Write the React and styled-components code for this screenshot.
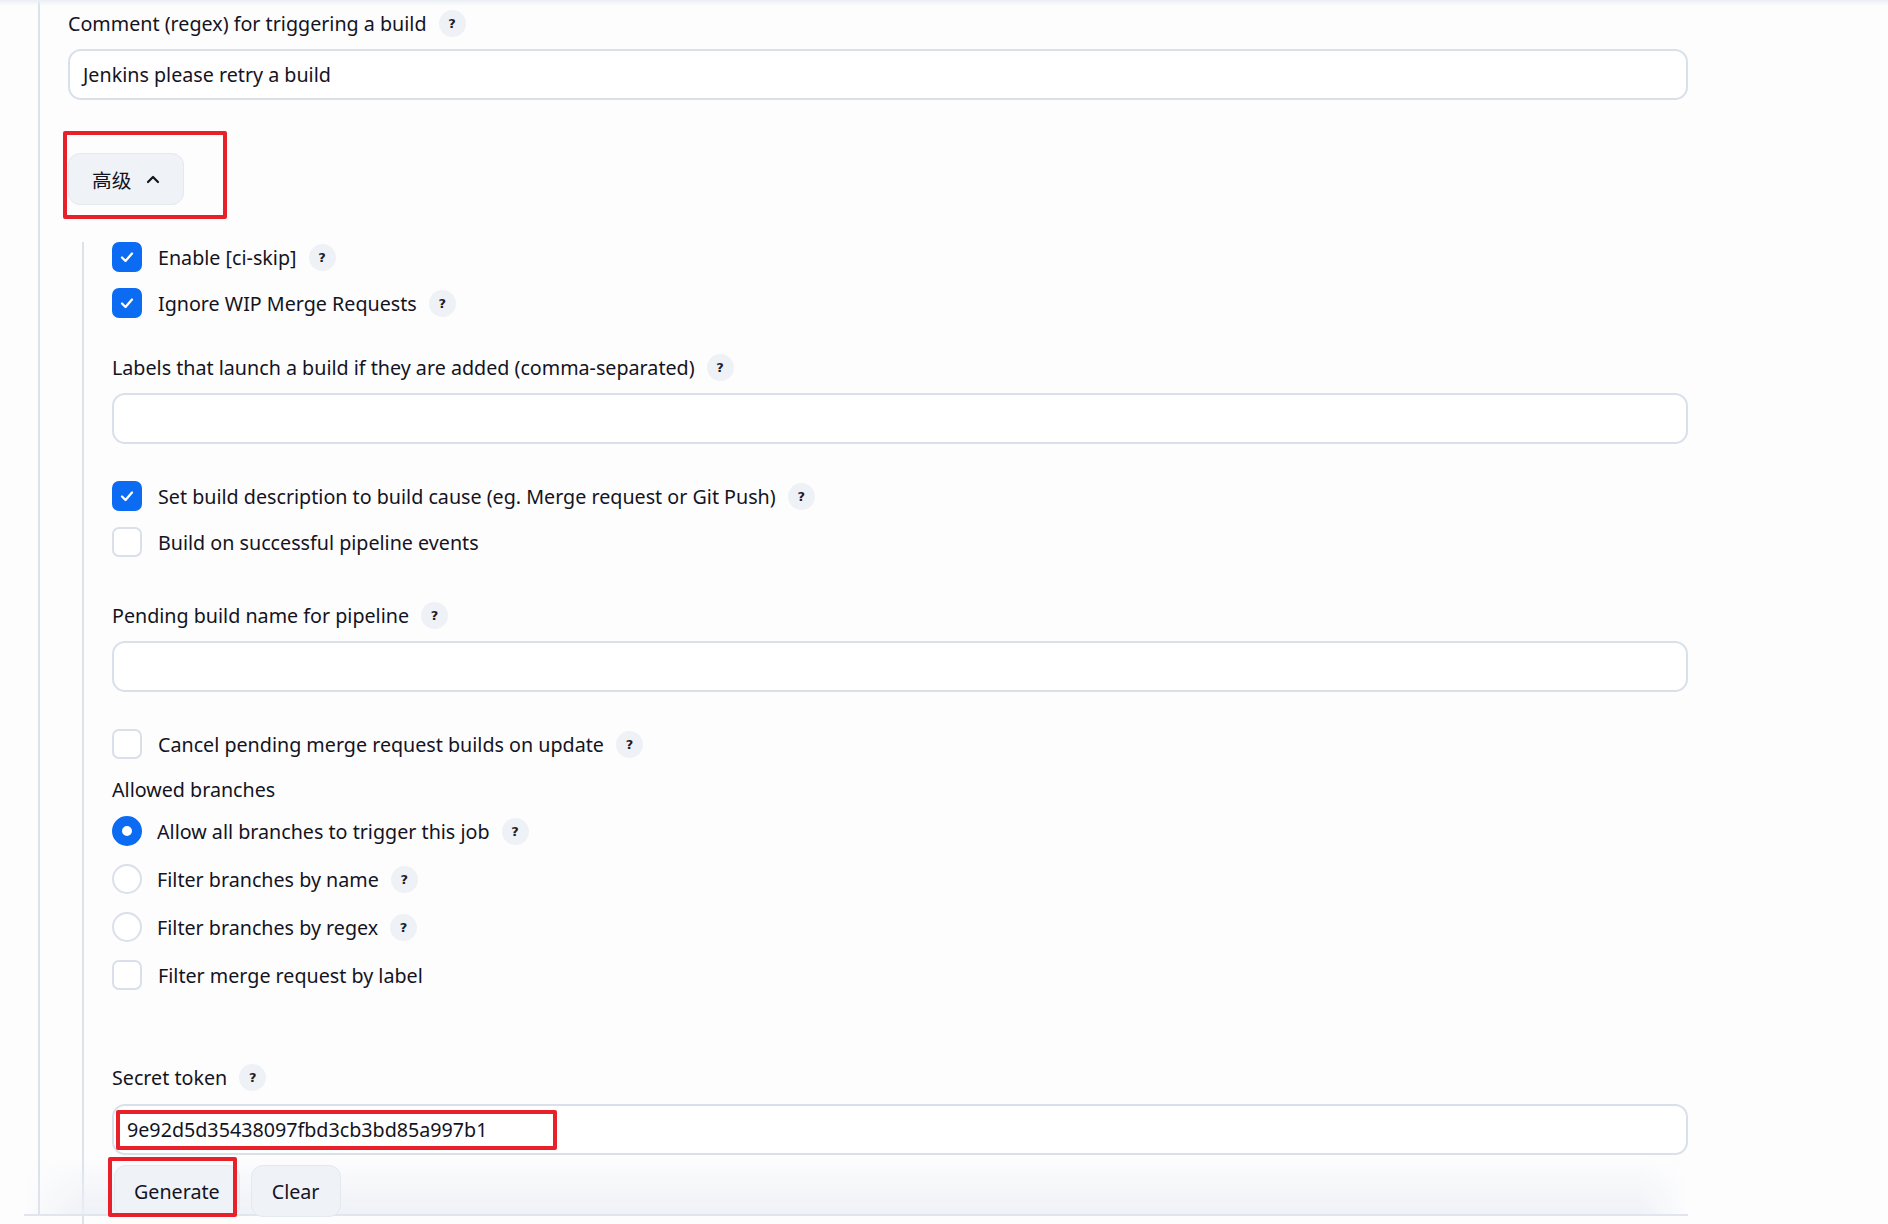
import React from 'react'
import styled, { createGlobalStyle } from 'styled-components'

const GlobalStyle = createGlobalStyle`
  html, body {
    margin: 0;
    padding: 0;
    background: #fdfdfe;
  }
  body {
    font-family: "Noto Sans", "Noto Sans CJK SC", sans-serif;
    color: #14141f;
  }
`

const Page = styled.div`
  position: relative;
  width: 1888px;
  height: 1224px;
  overflow: hidden;
`

const TopFade = styled.div`
  position: absolute;
  top: 0;
  left: 0;
  right: 0;
  height: 6px;
  background: linear-gradient(to bottom, #eaeef4, rgba(234, 238, 244, 0));
  z-index: 3;
`

const Main = styled.div`
  position: relative;
  margin-left: 24px;
  width: 1664px;
  height: 1224px;
`

const Section = styled.div`
  margin-left: 14px;
  border-left: 2px solid #dbe2ec;
  padding: 9px 0 0 28px;
  height: 1214px;
  box-sizing: border-box;
`

const Nested = styled.div`
  margin: ${p => p.$top || 0}px 0 0 14px;
  border-left: 2px solid #dbe2ec;
  padding-left: 28px;
  padding-bottom: 40px;
  display: flex;
  flex-direction: column;
`

const LabelRow = styled.div`
  display: flex;
  align-items: center;
  gap: 12px;
  height: 28px;
  margin-top: ${p => p.$top || 0}px;
  font-size: 19.7px;
`

const PlainLabel = styled.div`
  font-size: 19.7px;
  line-height: 28px;
  margin-top: ${p => p.$top || 0}px;
`

const Help = styled.span`
  width: 27px;
  height: 27px;
  border-radius: 50%;
  background: #eef1f6;
  display: inline-flex;
  align-items: center;
  justify-content: center;
  font-family: "DejaVu Sans", sans-serif;
  font-size: 13px;
  font-weight: 700;
  color: #1d1d2b;
  flex-shrink: 0;
`

const Field = styled.div`
  position: relative;
  margin-top: ${p => p.$top || 0}px;
  height: 51px;
  box-sizing: border-box;
  border: 2px solid #d8e0ea;
  border-radius: 13px;
  background: #fff;
  display: flex;
  align-items: center;
  padding-left: 13px;
  font-size: 19.7px;
`

const Annotation = styled.div`
  position: absolute;
  border: 4px solid #e8202a;
  border-radius: 2px;
  box-sizing: border-box;
  pointer-events: none;
  z-index: 4;
`

const AdvancedWrap = styled.div`
  position: relative;
  margin-top: 53px;
  align-self: flex-start;
`

const SoftButton = styled.button`
  height: 52px;
  box-sizing: border-box;
  padding: 0 ${p => p.$pad || 20}px;
  border: 1px solid #e4e8ef;
  border-radius: 12px;
  background: #eff2f7;
  font-family: "Noto Sans", "Noto Sans CJK SC", sans-serif;
  font-size: 19.7px;
  color: #14141f;
  display: inline-flex;
  align-items: center;
  gap: 15px;
`

const CheckRow = styled.div`
  display: flex;
  align-items: center;
  gap: ${p => p.$gap || 16}px;
  height: 30px;
  margin-top: ${p => p.$top || 0}px;
  font-size: 19.7px;
`

const Box = styled.span`
  width: 30px;
  height: 30px;
  box-sizing: border-box;
  border-radius: 7px;
  flex-shrink: 0;
  display: inline-flex;
  align-items: center;
  justify-content: center;
  background: ${p => (p.$on ? '#0b6bf2' : '#fff')};
  border: ${p => (p.$on ? 'none' : '2px solid #d9e0ea')};
`

const Radio = styled.span`
  width: 30px;
  height: 30px;
  box-sizing: border-box;
  border-radius: 50%;
  flex-shrink: 0;
  background: #fff;
  border: ${p => (p.$on ? '10px solid #0b6bf2' : '2px solid #d9e0ea')};
`

const Text = styled.span`
  white-space: nowrap;
`

const HelpGap = styled.span`
  display: inline-flex;
  align-items: center;
  gap: 12px;
`

const ButtonRow = styled.div`
  position: relative;
  z-index: 3;
  display: flex;
  gap: 11px;
  margin-top: 10px;
  margin-left: 2px;
`

const GenerateWrap = styled.div`
  position: relative;
`

const BottomBar = styled.div`
  position: absolute;
  left: 0;
  right: 0;
  top: 1158px;
  height: 56px;
  border-bottom: 2px solid #e1e6ee;
  z-index: 2;
  pointer-events: none;
  &::before {
    content: '';
    position: absolute;
    inset: 0;
    background: linear-gradient(to bottom, rgba(240, 242, 247, 0), rgba(236, 239, 245, 0.85));
    -webkit-mask-image: linear-gradient(to right, transparent, #000 60px, #000 calc(100% - 50px), transparent);
    mask-image: linear-gradient(to right, transparent, #000 60px, #000 calc(100% - 50px), transparent);
  }
`

const Check = () => (
  <svg width="16" height="16" viewBox="0 0 16 16" fill="none">
    <polyline points="3,8.5 6.5,12 13,4.5" stroke="#fff" strokeWidth="2.3" strokeLinecap="round" strokeLinejoin="round" />
  </svg>
)

const ChevronUp = () => (
  <svg width="14" height="10" viewBox="0 0 14 10" fill="none">
    <polyline points="2,8 7,3 12,8" stroke="#14141f" strokeWidth="2.2" strokeLinecap="round" strokeLinejoin="round" />
  </svg>
)

const CheckItem = ({ on, label, help, top }) => (
  <CheckRow $top={top}>
    <Box $on={on}>{on && <Check />}</Box>
    <HelpGap>
      <Text>{label}</Text>
      {help && <Help>?</Help>}
    </HelpGap>
  </CheckRow>
)

const RadioItem = ({ on, label, help, top }) => (
  <CheckRow $top={top} $gap={15}>
    <Radio $on={on} />
    <HelpGap>
      <Text>{label}</Text>
      {help && <Help>?</Help>}
    </HelpGap>
  </CheckRow>
)

const App = () => {
  return (
    <Page>
      <GlobalStyle />
      <TopFade />
      <Main>
        <Section>
          <LabelRow>
            <Text>Comment (regex) for triggering a build</Text>
            <Help>?</Help>
          </LabelRow>
          <Field $top={12}>Jenkins please retry a build</Field>

          <AdvancedWrap>
            <SoftButton $pad={23}>
              高级
              <ChevronUp />
            </SoftButton>
            <Annotation style={{ left: -5, top: -22, width: 164, height: 88 }} />
          </AdvancedWrap>

          <Nested $top={37}>
            <CheckItem on label="Enable [ci-skip]" help />
            <CheckItem on label="Ignore WIP Merge Requests" help top={16} />

            <LabelRow $top={35}>
              <Text>Labels that launch a build if they are added (comma-separated)</Text>
              <Help>?</Help>
            </LabelRow>
            <Field $top={12} />

            <CheckItem on label="Set build description to build cause (eg. Merge request or Git Push)" help top={37} />
            <CheckItem label="Build on successful pipeline events" top={16} />

            <LabelRow $top={44}>
              <Text>Pending build name for pipeline</Text>
              <Help>?</Help>
            </LabelRow>
            <Field $top={12} />

            <CheckItem label="Cancel pending merge request builds on update" help top={37} />

            <PlainLabel $top={17}>Allowed branches</PlainLabel>
            <RadioItem on label="Allow all branches to trigger this job" help top={12} />
            <RadioItem label="Filter branches by name" help top={18} />
            <RadioItem label="Filter branches by regex" help top={18} />
            <CheckItem label="Filter merge request by label" top={18} />

            <LabelRow $top={73}>
              <Text>Secret token</Text>
              <Help>?</Help>
            </LabelRow>
            <Field $top={13}>
              9e92d5d35438097fbd3cb3bd85a997b1
              <Annotation style={{ left: 2, top: 4, width: 441, height: 40 }} />
            </Field>

            <ButtonRow>
              <GenerateWrap>
                <SoftButton $pad={19}>Generate</SoftButton>
                <Annotation style={{ left: -6, top: -8, width: 129, height: 60 }} />
              </GenerateWrap>
              <SoftButton $pad={20}>Clear</SoftButton>
            </ButtonRow>
          </Nested>
        </Section>
        <BottomBar />
      </Main>
    </Page>
  )
}

export default App
